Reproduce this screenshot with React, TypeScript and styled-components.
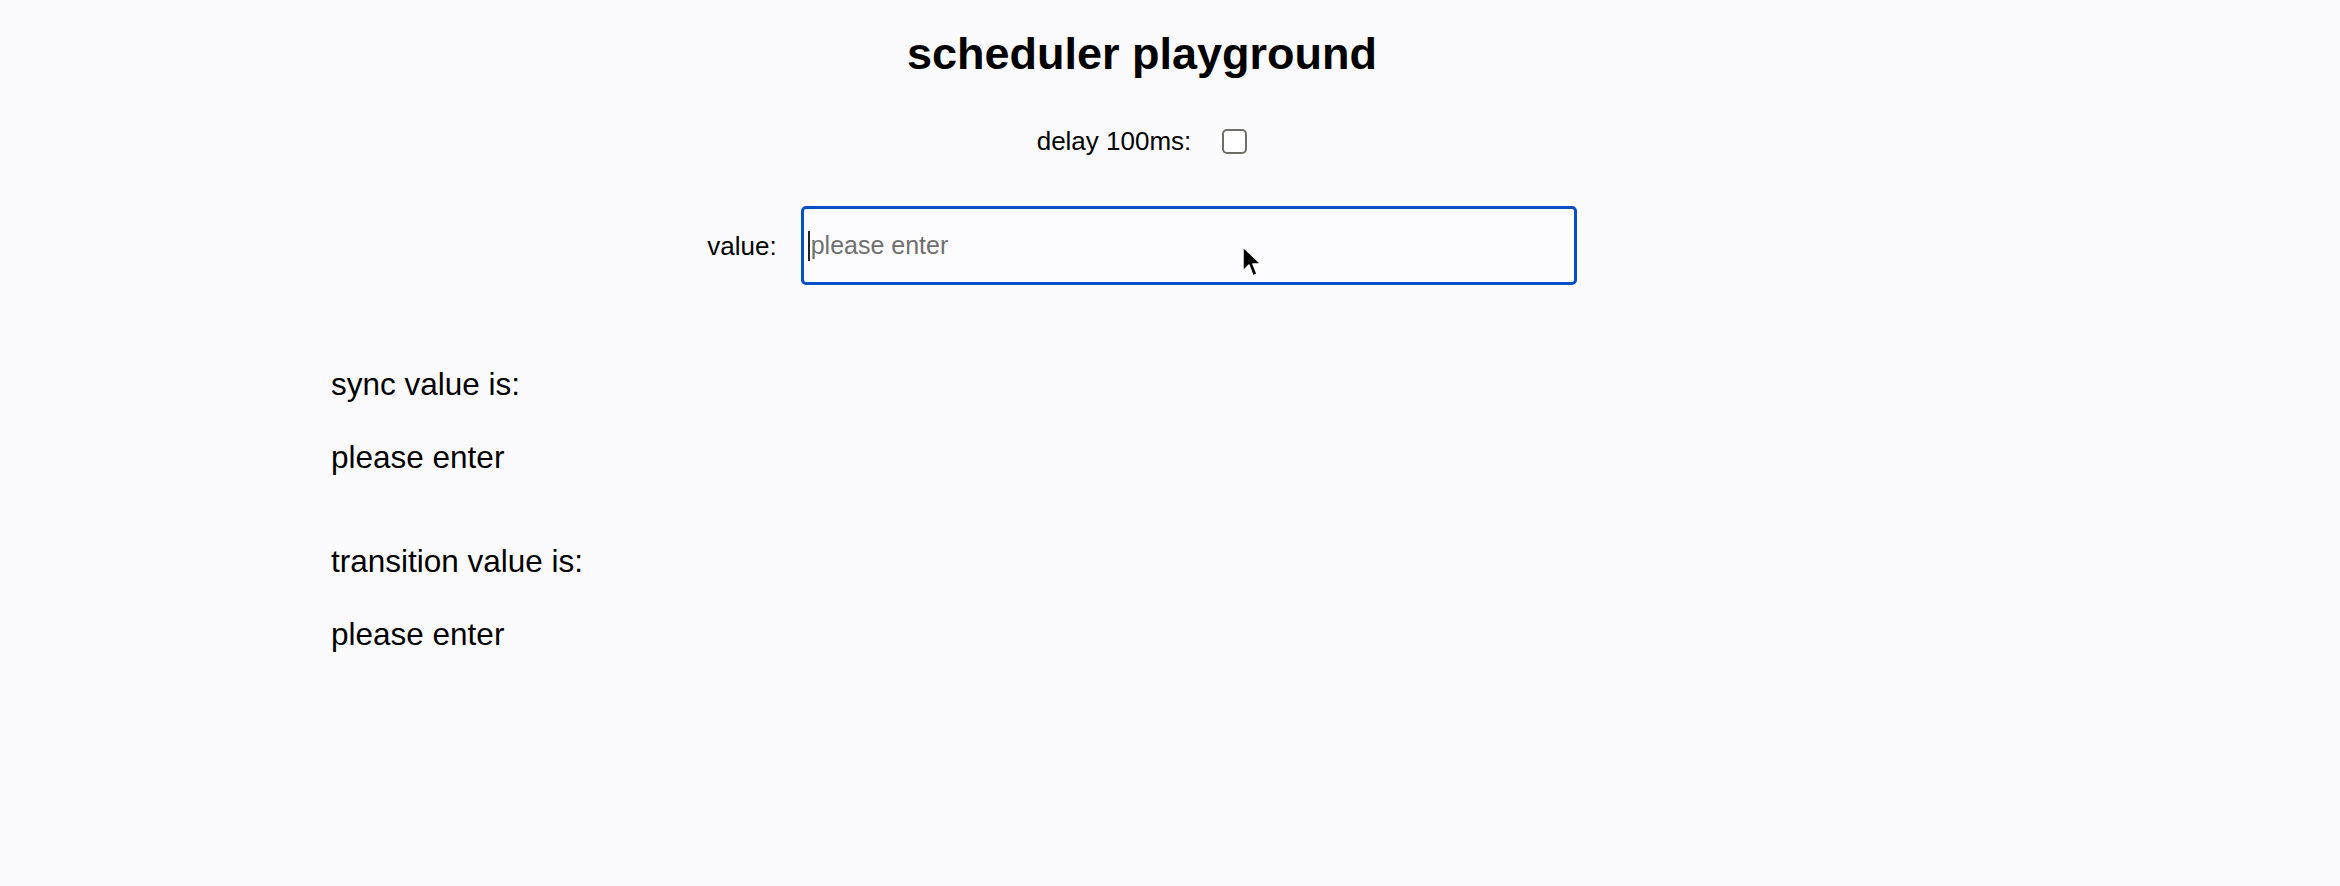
import React, { FC } from 'react';
import styled, { createGlobalStyle } from 'styled-components';

const GlobalStyle = createGlobalStyle`
  html, body {
    margin: 0;
    padding: 0;
    background-color: #fbfbfd;
    color: #000;
    font-family: 'Liberation Sans', Arial, sans-serif;
  }
`;

const Page = styled.div`
  width: 2284px;
  min-height: 886px;
  padding-top: 29px;
  box-sizing: border-box;
  display: flex;
  flex-direction: column;
`;

const Title = styled.h1`
  margin: 0;
  font-size: 45px;
  line-height: 50px;
  font-weight: 700;
  text-align: center;
`;

const Row = styled.div<{ gap: number; top: number }>`
  display: flex;
  align-items: center;
  justify-content: center;
  gap: ${({ gap }) => gap}px;
  margin-top: ${({ top }) => top}px;
`;

const Label = styled.label`
  font-size: 26px;
  line-height: 30px;
`;

const Checkbox = styled.span`
  display: inline-block;
  width: 21px;
  height: 21px;
  border: 2px solid #6e6e66;
  border-radius: 5px;
  background: #fff;
`;

const Input = styled.div`
  width: 776px;
  height: 79px;
  box-sizing: border-box;
  border: 3px solid #0550c8;
  border-radius: 5px;
  background: #fcfcfe;
  display: flex;
  align-items: center;
  padding-left: 4px;
  font-size: 25px;
  color: #6f6f6f;
  position: relative;
`;

const Caret = styled.span`
  display: inline-block;
  width: 2px;
  height: 30px;
  background: #222;
  margin-right: 1px;
`;

const Pointer = styled.svg`
  position: absolute;
  left: 437px;
  top: 36px;
`;

const Output = styled.section`
  margin-left: 331px;
  margin-top: 79px;
  display: flex;
  flex-direction: column;
`;

const Line = styled.p<{ top: number }>`
  margin: ${({ top }) => top}px 0 0;
  font-size: 31.5px;
  line-height: 40px;
`;

const App: FC = () => {
  const value = '';
  const shown = value || 'please enter';

  return (
    <Page>
      <GlobalStyle />
      <Title>scheduler playground</Title>

      <Row gap={31} top={47}>
        <Label>delay 100ms:</Label>
        <Checkbox role="checkbox" aria-checked="false" />
      </Row>

      <Row gap={24} top={50}>
        <Label>value:</Label>
        <Input>
          <Caret />
          please enter
          <Pointer width="22" height="34" viewBox="0 0 22 34">
            <path
              d="M2 2 L2 26 L8 20 L12 31 L16 29 L12 19 L20 19 Z"
              fill="#000"
              stroke="#fff"
              strokeWidth="1.5"
              strokeLinejoin="round"
            />
          </Pointer>
        </Input>
      </Row>

      <Output>
        <Line top={0}>sync value is:</Line>
        <Line top={33}>{shown}</Line>
        <Line top={64}>transition value is:</Line>
        <Line top={33}>{shown}</Line>
      </Output>
    </Page>
  );
};

export default App;
